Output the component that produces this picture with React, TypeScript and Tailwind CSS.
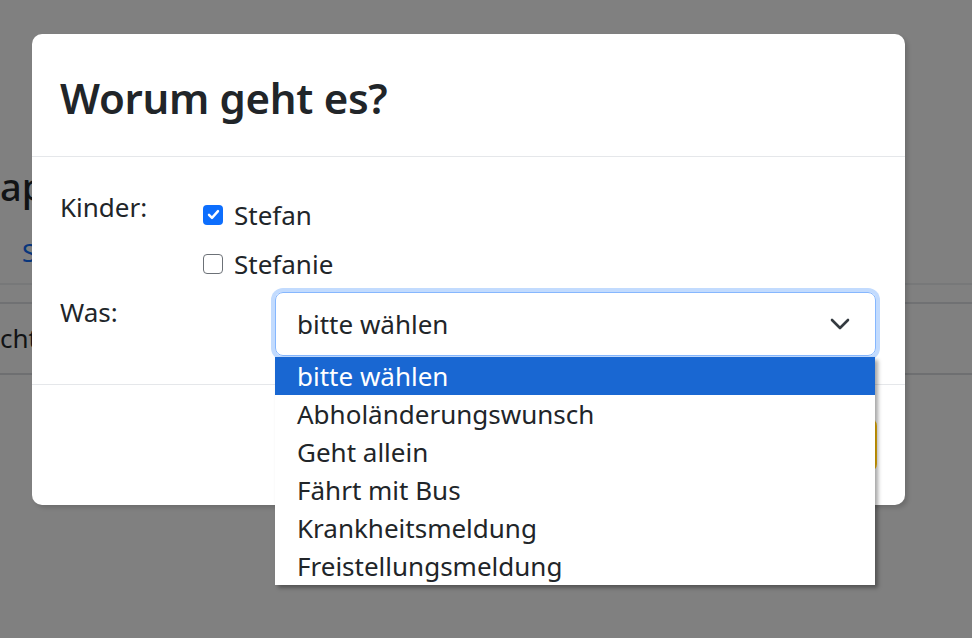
import React, { ReactElement } from "react"

const options = [
  "bitte wählen",
  "Abholänderungswunsch",
  "Geht allein",
  "Fährt mit Bus",
  "Krankheitsmeldung",
  "Freistellungsmeldung",
]

function Checkbox({ checked, label }: { checked: boolean; label: string }): ReactElement {
  return (
    <div className="flex h-[49px] items-center">
      {checked ? (
        <span className="flex h-[20px] w-[20px] items-center justify-center rounded-[4px] bg-[#0d6efd]">
          <svg width="15" height="15" viewBox="0 0 20 20" fill="none">
            <path d="M4 10.5l4 4 8-9" stroke="#fff" strokeWidth="3.2" strokeLinecap="round" strokeLinejoin="round" />
          </svg>
        </span>
      ) : (
        <span className="h-[20px] w-[20px] rounded-[4px] border-[1.5px] border-[#6c7177] bg-white" />
      )}
      <span className="ml-[11px] leading-[40px]">{label}</span>
    </div>
  )
}

function BackgroundPage(): ReactElement {
  return (
    <div className="flex flex-col text-[#111315]">
      <div className="h-[165px]" />
      <div className="h-[42px] text-[38px] leading-[42px] font-medium">ap</div>
      <div className="h-[30px]" />
      <div className="ml-[22px] h-[30px] text-[26px] leading-[30px] text-[#08367c]">S</div>
      <div className="h-[16px]" />
      <div className="h-[2px] bg-[#777879]" />
      <div className="h-[17px]" />
      <div className="h-[2px] bg-[#707173]" />
      <div className="flex h-[69px] items-center text-[26px]">cht</div>
      <div className="h-[2px] bg-[#6e6f71]" />
    </div>
  )
}

function App(): ReactElement {
  return (
    <div className="relative h-[638px] w-[972px] overflow-hidden bg-[#808080] font-['Noto_Sans',sans-serif] text-[#212529]">
      <BackgroundPage />

      <div className="absolute inset-0 pl-[32px] pt-[34px]">
        <div className="relative w-[873px] rounded-[10px] bg-white shadow-[3px_3px_4px_rgba(0,0,0,0.15)]">
          <div className="flex h-[123px] items-center border-b border-[#e5e7ea] px-[28px] pt-[5px]">
            <h1 className="text-[42px] font-semibold leading-none tracking-[-0.3px]">Worum geht es?</h1>
          </div>

          <div className="px-[28px] pt-[30px] pb-[28px] text-[26px]">
            <div className="flex items-start">
              <div className="w-[143px] leading-[40px]">Kinder:</div>
              <div className="mt-[3px] flex flex-col">
                <Checkbox checked label="Stefan" />
                <Checkbox checked={false} label="Stefanie" />
              </div>
            </div>

            <div className="mt-[4px] flex items-start">
              <div className="w-[215px] leading-[40px]">Was:</div>
              <div className="relative">
                <div className="flex h-[64px] w-[601px] items-center justify-between rounded-[8px] border border-[#86b7fe] pl-[21px] pr-[25px] shadow-[0_0_0_4px_#c2dbfe]">
                  <span className="leading-[40px]">bitte wählen</span>
                  <svg width="20" height="12" viewBox="0 0 20 12" fill="none">
                    <path d="M2 2l8 8 8-8" stroke="#343a40" strokeWidth="2.6" strokeLinecap="round" strokeLinejoin="round" />
                  </svg>
                </div>

                <ul className="absolute left-0 top-[65px] z-10 w-[600px] bg-white shadow-[3px_3px_4px_rgba(0,0,0,0.35)]">
                  {options.map((o, i) => (
                    <li
                      key={o}
                      className={
                        i === 0
                          ? "h-[38px] bg-[#1967d2] pl-[22px] leading-[38px] text-white"
                          : "h-[38px] pl-[22px] leading-[38px] text-[#212529]"
                      }
                    >
                      {o}
                    </li>
                  ))}
                </ul>
              </div>
            </div>
          </div>

          <div className="flex h-[121px] items-center justify-end border-t border-[#e5e7ea] px-[28px]">
            <button className="h-[54px] w-[170px] rounded-[8px] bg-[#ffc107] text-[26px] text-[#212529]">
              Senden
            </button>
          </div>
        </div>
      </div>
    </div>
  )
}

export default App
